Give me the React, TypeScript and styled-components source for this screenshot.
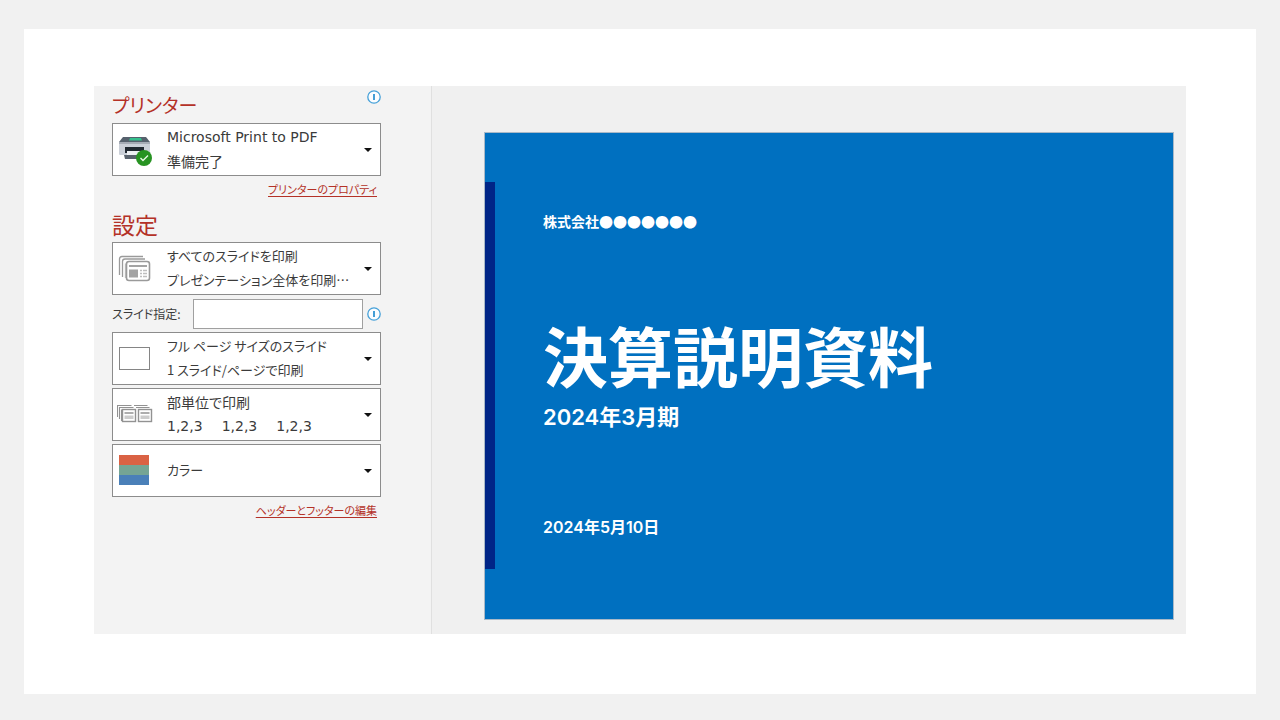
import React from "react";
import styled, { createGlobalStyle } from "styled-components";

const GlobalStyle = createGlobalStyle`
  * { box-sizing: border-box; }
  body {
    margin: 0;
    background: #f1f1f1;
    color: #3b3b3b;
    font-family: "Noto Sans CJK JP", "Noto Sans", sans-serif;
    font-size: 14px;
    line-height: 24px;
  }
`;

const Page = styled.div`
  min-height: 100vh;
  padding: 29px 24px 26px;
  display: flex;
`;

const Card = styled.main`
  flex: 1;
  background: #fff;
  padding: 57px 70px 60px;
`;

const Workspace = styled.div`
  display: grid;
  grid-template-columns: 338px 1fr;
  background: #f0f0f0;
`;

const Settings = styled.form`
  background: #f3f3f3;
  border-right: 1px solid #e0e0e0;
  padding: 0 50px 0 18px;
  font-feature-settings: "palt";
`;

const HeadingRow = styled.div`
  display: flex;
  align-items: flex-start;
  justify-content: space-between;
`;

const Heading = styled.h2<{ $kana?: boolean }>`
  margin: 0;
  padding-top: 2px;
  height: 37px;
  font-size: ${({ $kana }) => ($kana ? "19px" : "23px")};
  line-height: 34px;
  font-weight: 400;
  color: #b43127;
`;

const InfoButton = styled.button`
  display: flex;
  border: 0;
  padding: 0;
  margin: 4px 0;
  background: none;
`;

const Stack = styled.div`
  display: grid;
  grid-template-columns: minmax(0, 1fr);
  gap: 3px;
`;

const Choice = styled.button`
  display: grid;
  grid-template-columns: 36px minmax(0, 1fr) 10px;
  column-gap: 14px;
  align-items: center;
  width: 100%;
  min-height: 53px;
  padding: 0 7px 0 4px;
  border: 1px solid #8c8c8c;
  background: #fff;
  color: inherit;
  font: inherit;
  font-feature-settings: inherit;
  text-align: left;
`;

const Lines = styled.span`
  display: grid;
  padding-bottom: 2px;
  white-space: nowrap;
`;

const Kana = styled.span`
  font-size: 13px;
`;

const Latin = styled.span`
  font-family: "DejaVu Sans", sans-serif;
`;

const Sequence = styled.span`
  font-family: "DejaVu Sans", sans-serif;
  display: flex;
  gap: 19px;
`;

const FieldRow = styled.div`
  display: flex;
  align-items: center;
  justify-content: space-between;
  padding-top: 1px;
`;

const FieldLabel = styled.label`
  flex: 1;
  font-size: 12px;
  white-space: nowrap;
`;

const RangeInput = styled.input`
  width: 170px;
  height: 30px;
  margin-right: 4px;
  border: 1px solid #a0a0a0;
  background: #fff;
  font: inherit;
`;

const LinkRow = styled.div`
  padding: 1px 4px 4px;
  text-align: right;
  font-size: 11px;
`;

const TextLink = styled.a`
  color: #b43127;
  text-underline-offset: 2px;
`;

const Preview = styled.section`
  padding: 46px 12px 14px 52px;
`;

const Slide = styled.article`
  display: grid;
  grid-template-columns: 10px 1fr;
  column-gap: 48px;
  aspect-ratio: 690 / 488;
  background: #0070c0;
  border: 1px solid #a9b9c8;
  color: #fff;
  font-family: Inter, "Noto Sans CJK JP", sans-serif;
`;

const Accent = styled.div`
  margin: 49px 0 50px;
  background: #002587;
`;

const SlideText = styled.div`
  display: flex;
  flex-direction: column;
  padding-top: 76px;
`;

const Company = styled.p`
  margin: 0 0 76px;
  font-family: "Noto Sans CJK JP", sans-serif;
  font-weight: 700;
  line-height: 24px;
`;

const Title = styled.h1`
  margin: 0;
  font-family: "Noto Sans CJK JP", sans-serif;
  font-size: 65px;
  line-height: 90px;
  font-weight: 700;
`;

const Period = styled.p`
  margin: 4px 0 84px;
  font-size: 22px;
  line-height: 28px;
  font-weight: 600;
`;

const DateText = styled.p`
  margin: 0;
  font-size: 16px;
  font-weight: 600;
`;

const InfoIcon = () => (
  <svg width="14" height="14" viewBox="0 0 14 14" aria-hidden="true">
    <circle cx="7" cy="7" r="6.2" fill="#fbfdff" stroke="#45a0d8" strokeWidth="1.3" />
    <path d="M7 4v6" stroke="#2f93d2" strokeWidth="1.8" />
  </svg>
);

const Arrow = () => (
  <svg width="10" height="6" viewBox="0 0 10 6" aria-hidden="true">
    <path d="M1 1h8L5 5z" fill="#111" />
  </svg>
);

const PrinterIcon = () => (
  <svg width="36" height="36" viewBox="0 0 36 36" aria-hidden="true">
    <path d="M6 5h23l4 5H2z" fill="#56616d" />
    <path d="M13 6h11l1 2.500H12z" fill="#35c08d" />
    <path d="M2 10h31v12q0 1-1 1H3q-1 0-1-1z" fill="#cbd0d8" />
    <path d="M2 10h31v2H2z" fill="#a5abb5" />
    <path d="M8 15h19v6H8z" fill="#202830" />
    <path d="M10 19h17v5H10z" fill="#eef0f3" />
    <path d="M7 23h15v4H8z" fill="#59626d" />
    <circle cx="27" cy="26" r="8" fill="#279322" />
    <path d="M23.5 26l2.5 2.5 5-5" fill="none" stroke="#e8f8e5" strokeWidth="1.4" />
  </svg>
);

const SlidesIcon = () => (
  <svg width="36" height="30" viewBox="0 0 36 30" fill="none" stroke="#9a9a9a" strokeWidth="1.3" aria-hidden="true">
    <path d="M2.5 21V5q0-2.500 2.500-2.500h21M5.500 23V7.500q0-2.500 2.500-2.500h20" />
    <path d="M8.500 24V9.500" stroke="#c4c4c4" />
    <rect x="9.500" y="7.500" width="23" height="19" rx="2.500" strokeWidth="1.600" />
    <path d="M12 12h18" strokeWidth="1.800" />
    <path d="M12 15.500h9v8h-9z" fill="#a3a3a3" stroke="none" />
    <path d="M23 16.500h2m1 0h4M23 19.500h2m1 0h4M23 22.500h2m1 0h4" stroke="#bebebe" />
  </svg>
);

const PageIcon = () => (
  <svg width="36" height="26" viewBox="0 0 36 26" aria-hidden="true">
    <rect x="2.500" y="1.500" width="30" height="22" fill="#fff" stroke="#858585" />
  </svg>
);

const CollateIcon = () => (
  <svg width="36" height="24" viewBox="0 0 36 24" fill="none" stroke="#929292" strokeWidth="1.100" aria-hidden="true">
    <path d="M.5 14V2.500H14.500M2.500 16V4.500H16.500M4.500 18V6.500M17 2.500H30.500M19 4.500H32.500" />
    <rect x="5.500" y="6.500" width="13" height="12" fill="#fff" strokeWidth="1.400" />
    <rect x="21.500" y="6.500" width="13" height="12" fill="#fff" strokeWidth="1.400" />
    <path d="M7.500 10h9M23.500 10h9" strokeWidth="1.400" />
    <path d="M7.500 12.500h9v3.500h-9zM23.500 12.500h9v3.500h-9z" fill="#cccccc" stroke="none" />
  </svg>
);

const ColorIcon = () => (
  <svg width="36" height="32" viewBox="0 0 36 32" aria-hidden="true">
    <path d="M2 0h30v10H2z" fill="#da6244" />
    <path d="M2 10h30v10H2z" fill="#75a594" />
    <path d="M2 20h30v10H2z" fill="#4a80b8" />
  </svg>
);

function Option({ icon, children }: { icon: React.ReactNode; children: React.ReactNode }) {
  return (
    <Choice type="button" aria-haspopup="listbox">
      {icon}
      <Lines>{children}</Lines>
      <Arrow />
    </Choice>
  );
}

export default function App() {
  return (
    <>
      <GlobalStyle />
      <Page lang="ja">
        <Card>
          <Workspace>
            <Settings>
              <HeadingRow>
                <Heading $kana>プリンター</Heading>
                <InfoButton type="button" aria-label="プリンターの情報"><InfoIcon /></InfoButton>
              </HeadingRow>
              <Option icon={<PrinterIcon />}>
                <Latin>Microsoft Print to PDF</Latin>
                <span>準備完了</span>
              </Option>
              <LinkRow><TextLink href="#properties">プリンターのプロパティ</TextLink></LinkRow>
              <Heading>設定</Heading>
              <Stack>
                <Option icon={<SlidesIcon />}>
                  <Kana>すべてのスライドを印刷</Kana>
                  <Kana>プレゼンテーション全体を印刷…</Kana>
                </Option>
                <FieldRow>
                  <FieldLabel htmlFor="slide-range">スライド指定:</FieldLabel>
                  <RangeInput id="slide-range" type="text" />
                  <InfoButton type="button" aria-label="スライド指定の情報"><InfoIcon /></InfoButton>
                </FieldRow>
                <Option icon={<PageIcon />}>
                  <Kana>フル ページ サイズのスライド</Kana>
                  <Kana>1 スライド/ページで印刷</Kana>
                </Option>
                <Option icon={<CollateIcon />}>
                  <span>部単位で印刷</span>
                  <Sequence><span>1,2,3</span><span>1,2,3</span><span>1,2,3</span></Sequence>
                </Option>
                <Option icon={<ColorIcon />}>
                  <Kana>カラー</Kana>
                </Option>
              </Stack>
              <LinkRow><TextLink href="#header-footer">ヘッダーとフッターの編集</TextLink></LinkRow>
            </Settings>
            <Preview>
              <Slide>
                <Accent />
                <SlideText>
                  <Company>株式会社●●●●●●●</Company>
                  <Title>決算説明資料</Title>
                  <Period>2024年3月期</Period>
                  <DateText>2024年5月10日</DateText>
                </SlideText>
              </Slide>
            </Preview>
          </Workspace>
        </Card>
      </Page>
    </>
  );
}
